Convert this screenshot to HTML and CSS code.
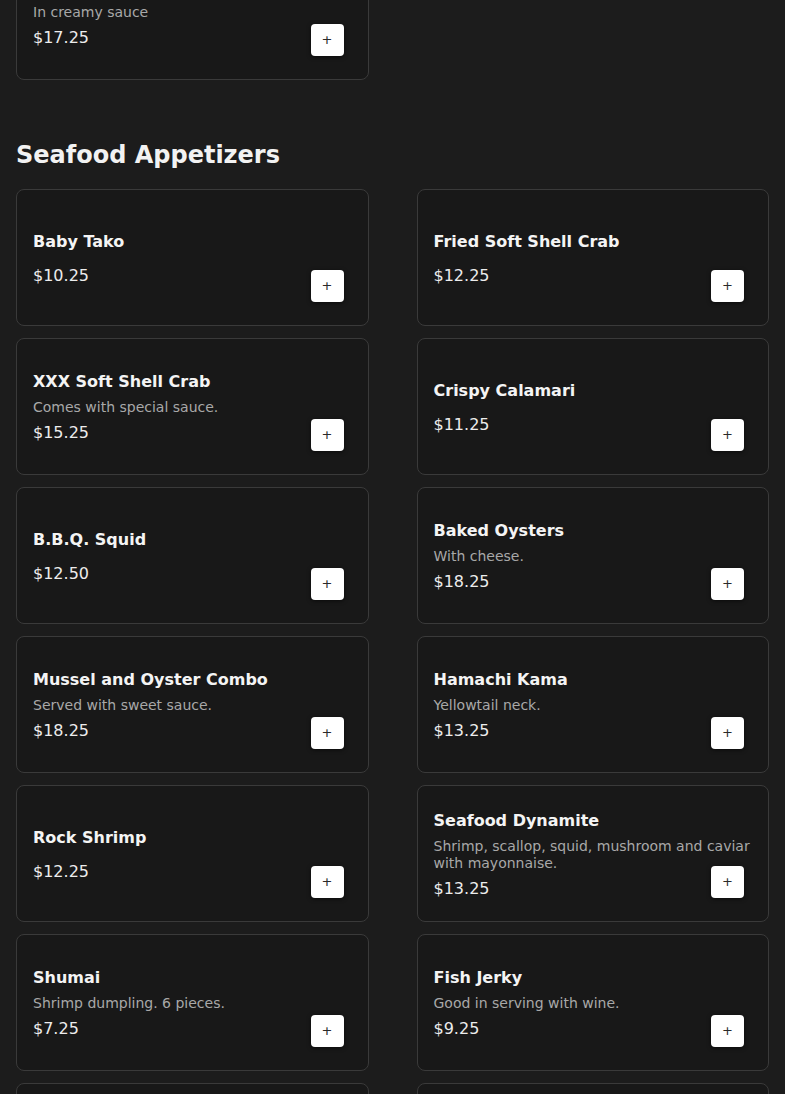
FILE: index.html
```html
<!DOCTYPE html>
<html>
<head>
<meta charset="utf-8">
<link rel="stylesheet" href="styles.css">
</head>
<body>
<main class="page">
  <section class="section section-prev">
    <div class="grid">
      <div class="card">
        <div class="info">
          <div class="name">Shrimp Tempura</div>
          <div class="desc">In creamy sauce</div>
          <div class="price">$17.25</div>
        </div>
        <button class="add">+</button>
      </div>
    </div>
  </section>

  <section class="section">
    <h2 class="heading">Seafood Appetizers</h2>
    <div class="grid">
      <div class="card"><div class="info"><div class="name">Baby Tako</div><div class="price">$10.25</div></div><button class="add">+</button></div>
      <div class="card"><div class="info"><div class="name">Fried Soft Shell Crab</div><div class="price">$12.25</div></div><button class="add">+</button></div>
      <div class="card"><div class="info"><div class="name">XXX Soft Shell Crab</div><div class="desc">Comes with special sauce.</div><div class="price">$15.25</div></div><button class="add">+</button></div>
      <div class="card"><div class="info"><div class="name">Crispy Calamari</div><div class="price">$11.25</div></div><button class="add">+</button></div>
      <div class="card"><div class="info"><div class="name">B.B.Q. Squid</div><div class="price">$12.50</div></div><button class="add">+</button></div>
      <div class="card"><div class="info"><div class="name">Baked Oysters</div><div class="desc">With cheese.</div><div class="price">$18.25</div></div><button class="add">+</button></div>
      <div class="card"><div class="info"><div class="name">Mussel and Oyster Combo</div><div class="desc">Served with sweet sauce.</div><div class="price">$18.25</div></div><button class="add">+</button></div>
      <div class="card"><div class="info"><div class="name">Hamachi Kama</div><div class="desc">Yellowtail neck.</div><div class="price">$13.25</div></div><button class="add">+</button></div>
      <div class="card"><div class="info"><div class="name">Rock Shrimp</div><div class="price">$12.25</div></div><button class="add">+</button></div>
      <div class="card"><div class="info"><div class="name">Seafood Dynamite</div><div class="desc">Shrimp, scallop, squid, mushroom and caviar with mayonnaise.</div><div class="price">$13.25</div></div><button class="add">+</button></div>
      <div class="card"><div class="info"><div class="name">Shumai</div><div class="desc">Shrimp dumpling. 6 pieces.</div><div class="price">$7.25</div></div><button class="add">+</button></div>
      <div class="card"><div class="info"><div class="name">Fish Jerky</div><div class="desc">Good in serving with wine.</div><div class="price">$9.25</div></div><button class="add">+</button></div>
      <div class="card"><div class="info"><div class="name">Salmon Kama</div><div class="desc">Salmon collar.</div><div class="price">$12.25</div></div><button class="add">+</button></div>
      <div class="card"><div class="info"><div class="name">Grilled Squid</div><div class="price">$12.25</div></div><button class="add">+</button></div>
    </div>
  </section>
</main>
</body>
</html>
```
FILE: styles.css
```css
html, body {
  margin: 0;
  padding: 0;
  background: #1c1c1c;
  font-family: "DejaVu Sans", "Liberation Sans", sans-serif;
  color: #ffffff;
}
.page {
  padding: 0 16px;
}
.section-prev {
  margin-top: -57px;
}
.heading {
  margin: 61px 0 20px;
  font-size: 24px;
  line-height: 28px;
  font-weight: bold;
  color: #f2f2f2;
}
.grid {
  display: grid;
  grid-template-columns: 1fr 1fr;
  column-gap: 48px;
  row-gap: 12px;
}
.card {
  box-sizing: border-box;
  height: 137px;
  border: 1px solid #3a3a3a;
  border-radius: 8px;
  background: #181818;
  display: flex;
  align-items: center;
  padding: 0 16px;
  position: relative;
}
.info {
  flex: 1;
  display: flex;
  flex-direction: column;
  margin-top: 1px;
}
.name {
  font-size: 16px;
  line-height: 19px;
  font-weight: bold;
  color: #f4f4f4;
  margin-bottom: 8px;
}
.desc {
  font-size: 14px;
  line-height: 17px;
  color: #a8a8a8;
}
.price {
  font-size: 16px;
  line-height: 19px;
  color: #ececec;
  margin-top: 7px;
}
.name + .price {
  margin-top: 7px;
}
.add {
  position: absolute;
  right: 24px;
  bottom: 23px;
  width: 33px;
  height: 32px;
  border: none;
  border-radius: 4px;
  background: #ffffff;
  color: #2a2a2a;
  font-family: "DejaVu Sans", sans-serif;
  font-size: 13px;
  line-height: 32px;
  padding: 0;
  box-shadow: 0 1px 4px rgba(0, 0, 0, 0.6);
}
```
